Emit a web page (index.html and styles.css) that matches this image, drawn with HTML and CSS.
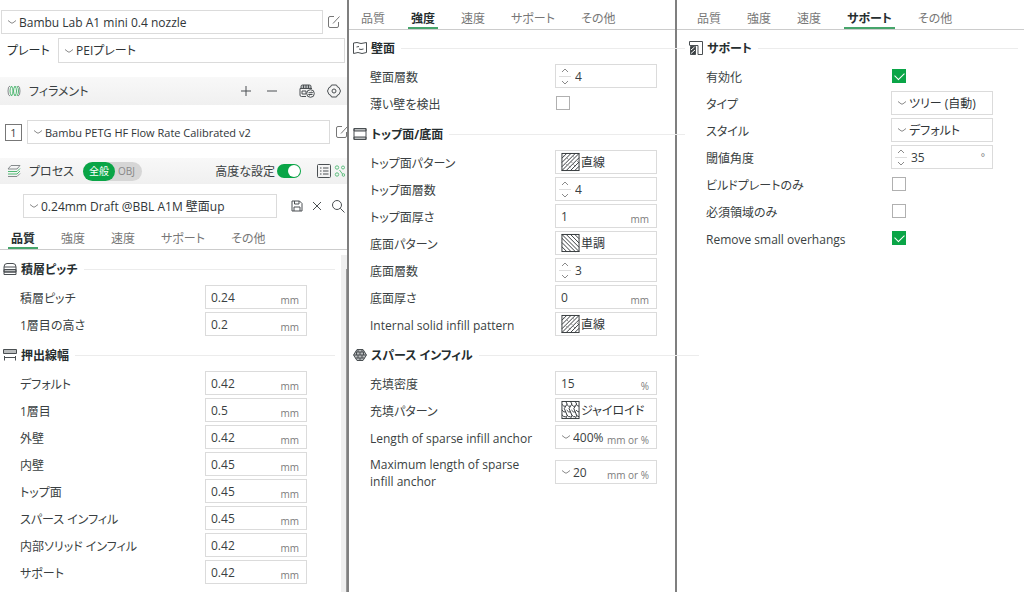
FILE: index.html
```
<!DOCTYPE html>
<html lang="ja">
<head>
  <meta charset="utf-8">
  <title>Print Settings</title>
  <link rel="stylesheet" href="styles.css">
</head>
<body>
  <!-- Shared icons -->
  <svg class="sprite" aria-hidden="true">
    <symbol id="chevron" viewBox="0 0 10 6"><path d="M1 1.500L4 3.800Q5 4.500 6 3.800L9 1.500" /></symbol>
    <symbol id="up" viewBox="0 0 8 5"><path d="M1 4L4 1L7 4" /></symbol>
    <symbol id="down" viewBox="0 0 8 5"><path d="M1 1L4 4L7 1" /></symbol>
    <symbol id="edit" viewBox="0 0 14 14"><path d="M7 1.500H3Q1.500 1.500 1.500 3V11Q1.500 12.500 3 12.500H10Q11.500 12.500 11.500 11V7M6 8.500L12.500 1.500" /></symbol>
    <symbol id="grid" viewBox="0 0 20 20">
      <rect x="1" y="1" width="18" height="18" />
      <path d="M1 6L6 1M1 10.500L10.500 1M1 15L15 1M1 19L19 1M5.500 19L19 5.500M10 19L19 10M14.500 19L19 14.500" />
      <path class="thin" d="M6 5.500L8 7.500M12 3.500L14 5.500M4 11L6 13M10 9L12 11M16 8L18 10M8 14L10 16M13 12.500L15 14.500M3 3L4 4" />
    </symbol>
    <symbol id="mono" viewBox="0 0 20 20">
      <rect x="1" y="1" width="18" height="18" />
      <path d="M1 14L6 19M1 9.500L10.500 19M1 5L15 19M1 1L19 19M5.500 1L19 14.500M10 1L19 10M14.500 1L19 5.500" />
    </symbol>
    <symbol id="gyroid" viewBox="0 0 20 20">
      <rect x="1" y="1" width="18" height="18" />
      <path d="M5 1Q8 4 5 6T5 12T5 19M10 1Q13 4 10 6T10 12T10 19M15 1Q18 4 15 6T15 12T15 19" />
      <path d="M1 4Q3 7 5 6M6 4Q8 7 10 6M11 4Q13 7 15 6M16 4Q17 6 19 6M1 10Q3 13 5 12M6 10Q8 13 10 12M11 10Q13 13 15 12M16 10Q17 12 19 12M1 15Q3 18 5 17M6 15Q8 18 10 17M11 15Q13 18 15 17M16 15Q17 17 19 17" />
    </symbol>
  </svg>

  <main class="layout">
    <div class="panel panel-quality">
      <div class="printer-row">
        <label class="field"><svg class="chevron"><use href="#chevron" /></svg>
          <select aria-label="プリンター"><option>Bambu Lab A1 mini 0.4 nozzle</option></select></label>
        <button class="icon-button" aria-label="編集"><svg class="edit"><use href="#edit" /></svg></button>
      </div>
      <div class="plate-row">
        <label for="plate">プレート</label>
        <div class="field"><svg class="chevron"><use href="#chevron" /></svg>
          <select id="plate"><option>PEIプレート</option></select></div>
      </div>

      <div class="bar">
        <svg class="bar-icon" viewBox="0 0 14 14">
          <path class="gray" d="M3 2Q1 2 1 7T3 12M11 2Q13 2 13 7T11 12" />
          <path class="green" d="M4.500 2Q3 4 3 7T4.500 12Q6 10 6 7T4.500 2M8 2Q6.500 4 6.500 7T8 12Q9.500 10 9.500 7T8 2M10 2Q11.500 4 11.500 7T10 12" />
        </svg>
        <h1>フィラメント</h1>
        <div class="filament-tools">
          <button class="icon-button" aria-label="追加"><svg class="tool" viewBox="0 0 14 14"><path d="M7 2V12M2 7H12" /></svg></button>
          <button class="icon-button" aria-label="削除"><svg class="tool" viewBox="0 0 14 14"><path d="M2 7H12" /></svg></button>
          <button class="icon-button ams" aria-label="AMS"><svg viewBox="0 0 16 14">
            <path class="fill" d="M2 4.500V2.500Q2 1 3.500 1H10.500Q12 1 12 2.500V4.500Z" />
            <path d="M1 4.500H13M1 4.500V11Q1 12.500 2.500 12.500H7M4.500 1V4.500M7 1V4.500M9.500 1V4.500M3 7H7V10H3Z" />
            <circle cx="11.500" cy="9.500" r="3.800" /><path d="M9.500 8.700H13.500L12.500 7.700M13.500 10.500H9.500L10.500 11.500" /></svg></button>
          <button class="icon-button" aria-label="設定"><svg class="tool" viewBox="0 0 14 14"><path d="M4.500 1H9.500L10.500 3L12 3.500L13.500 7L12 10.500L10.500 11L9.500 13H4.500L3.500 11L2 10.500L0.500 7L2 3.500L3.500 3Z" /><circle cx="7" cy="7" r="2" /></svg></button>
        </div>
      </div>
      <div class="filament-row">
        <span class="slot">1</span>
        <label class="field"><svg class="chevron"><use href="#chevron" /></svg>
          <select aria-label="フィラメント"><option>Bambu PETG HF Flow Rate Calibrated v2</option></select></label>
        <button class="icon-button" aria-label="編集"><svg class="edit"><use href="#edit" /></svg></button>
      </div>

      <div class="bar bar-process">
        <svg class="bar-icon" viewBox="0 0 14 14">
          <path class="gray" d="M4 1.500H13L10 5H1Z" />
          <path class="green" d="M1 7.500H10L13 4.500M1 10H10L13 7" />
          <path class="gray" d="M1 12.500H10L13 9.500" />
        </svg>
        <h1>プロセス</h1>
        <div class="scope">
          <button class="selected">全般</button>
          <button>OBJ</button>
        </div>
        <label class="advanced">高度な設定<input type="checkbox" class="switch" checked></label>
        <div class="process-tools">
          <button class="icon-button" aria-label="一覧"><svg class="tool" viewBox="0 0 14 14"><rect x="0.500" y="0.500" width="13" height="13" rx="1" /><path d="M3 4H4.500M6 4H11.500M3 7H4.500M6 7H11.500M3 10H4.500M6 10H11.500" /></svg></button>
          <button class="icon-button compare" aria-label="比較"><svg viewBox="0 0 11 14"><circle cx="3" cy="3.500" r="1.700" /><circle cx="9" cy="3.500" r="1.500" /><circle cx="3" cy="10.500" r="1.700" /><circle cx="9.500" cy="11" r="1.300" /><path d="M5.500 6L8.500 10" /></svg></button>
        </div>
      </div>
      <div class="preset-row">
        <label class="field"><svg class="chevron"><use href="#chevron" /></svg>
          <select aria-label="プロセス"><option>0.24mm Draft @BBL A1M 壁面up</option></select></label>
        <div class="preset-tools">
          <button class="icon-button" aria-label="保存"><svg class="small" viewBox="0 0 12 12"><path d="M1 1H8.500L11 3.500V11H1ZM3.500 1V4H8V1M3 11V7H9V11" /></svg></button>
          <button class="icon-button" aria-label="リセット"><svg class="small" viewBox="0 0 12 12"><path d="M2 2L10 10M10 2L2 10" /></svg></button>
          <button class="icon-button" aria-label="検索"><svg class="tool" viewBox="0 0 14 14"><circle cx="6" cy="6" r="4.500" /><path d="M9.300 9.300L13.500 13.500" /></svg></button>
        </div>
      </div>

      <nav class="tabs">
        <a href="#" class="active">品質</a>
        <a href="#">強度</a>
        <a href="#">速度</a>
        <a href="#">サポート</a>
        <a href="#">その他</a>
      </nav>
      <div class="scroll-area">
        <div class="settings">
          <h2><svg viewBox="0 0 14 14"><path class="fill" d="M1 7.500H13V10H1Z" /><path d="M1 5Q1 1.500 4 1.500H10Q13 1.500 13 5V12.500H1ZM1 7.500H13M1 10H13M1 5H13" /></svg>積層ピッチ</h2>
          <div class="row"><label for="layer">積層ピッチ</label><div class="field"><input id="layer" value="0.24"><span class="unit">mm</span></div></div>
          <div class="row"><label for="first-layer">1層目の高さ</label><div class="field"><input id="first-layer" value="0.2"><span class="unit">mm</span></div></div>

          <h2><svg viewBox="0 0 14 14"><path class="fill" d="M0.500 1.500H13.500V5.500H0.500Z" /><path d="M1.500 8V12.500M12.500 8V12.500M1.500 9.500H12.500" /></svg>押出線幅</h2>
          <div class="row"><label for="w-default">デフォルト</label><div class="field"><input id="w-default" value="0.42"><span class="unit">mm</span></div></div>
          <div class="row"><label for="w-first">1層目</label><div class="field"><input id="w-first" value="0.5"><span class="unit">mm</span></div></div>
          <div class="row"><label for="w-outer">外壁</label><div class="field"><input id="w-outer" value="0.42"><span class="unit">mm</span></div></div>
          <div class="row"><label for="w-inner">内壁</label><div class="field"><input id="w-inner" value="0.45"><span class="unit">mm</span></div></div>
          <div class="row"><label for="w-top">トップ面</label><div class="field"><input id="w-top" value="0.45"><span class="unit">mm</span></div></div>
          <div class="row"><label for="w-sparse">スパース インフィル</label><div class="field"><input id="w-sparse" value="0.45"><span class="unit">mm</span></div></div>
          <div class="row"><label for="w-solid">内部ソリッド インフィル</label><div class="field"><input id="w-solid" value="0.42"><span class="unit">mm</span></div></div>
          <div class="row"><label for="w-support">サポート</label><div class="field"><input id="w-support" value="0.42"><span class="unit">mm</span></div></div>
        </div>
        <div class="scrollbar"></div>
      </div>
    </div>

    <div class="panel panel-strength">
      <nav class="tabs">
        <a href="#">品質</a>
        <a href="#" class="active">強度</a>
        <a href="#">速度</a>
        <a href="#">サポート</a>
        <a href="#">その他</a>
      </nav>
      <div class="settings">
        <h2><svg viewBox="0 0 14 14"><path d="M0.500 2L4 1.500L8 2.500L13.500 1.500V11.500L9 12.500L5 11.500L0.500 12.500ZM3.500 6L6 5.500M6 8L8 8.500L10.500 8" /></svg>壁面</h2>
        <div class="row"><label for="walls">壁面層数</label><div class="field spin">
          <span class="arrows"><button aria-label="増やす"><svg><use href="#up" /></svg></button><button aria-label="減らす"><svg><use href="#down" /></svg></button></span><input id="walls" value="4"></div></div>
        <div class="row"><label for="thin">薄い壁を検出</label><input type="checkbox" class="check" id="thin"></div>

        <h2><svg viewBox="0 0 14 14"><path class="fill" d="M1 1.500H13V4H1ZM1 10H13V12.500H1Z" /><path d="M1 1.500H13V12.500H1Z" /></svg>トップ面/底面</h2>
        <div class="row"><label for="top-pattern">トップ面パターン</label><div class="field pattern"><svg><use href="#grid" /></svg><select id="top-pattern"><option>直線</option></select></div></div>
        <div class="row"><label for="top-layers">トップ面層数</label><div class="field spin">
          <span class="arrows"><button aria-label="増やす"><svg><use href="#up" /></svg></button><button aria-label="減らす"><svg><use href="#down" /></svg></button></span><input id="top-layers" value="4"></div></div>
        <div class="row"><label for="top-thick">トップ面厚さ</label><div class="field"><input id="top-thick" value="1"><span class="unit">mm</span></div></div>
        <div class="row"><label for="bottom-pattern">底面パターン</label><div class="field pattern"><svg><use href="#mono" /></svg><select id="bottom-pattern"><option>単調</option></select></div></div>
        <div class="row"><label for="bottom-layers">底面層数</label><div class="field spin">
          <span class="arrows"><button aria-label="増やす"><svg><use href="#up" /></svg></button><button aria-label="減らす"><svg><use href="#down" /></svg></button></span><input id="bottom-layers" value="3"></div></div>
        <div class="row"><label for="bottom-thick">底面厚さ</label><div class="field"><input id="bottom-thick" value="0"><span class="unit">mm</span></div></div>
        <div class="row"><label for="solid-pattern">Internal solid infill pattern</label><div class="field pattern"><svg><use href="#grid" /></svg><select id="solid-pattern"><option>直線</option></select></div></div>

        <h2><svg viewBox="0 0 14 14"><path class="fill" d="M4 1.500H10L13.500 7L10 12.500H4L0.500 7Z" /><path d="M2.500 4H11.500M1 7H13M2.500 10H11.500M5 1.500V4M9 1.500V4M3.500 4V7M7 4V7M10.500 4V7M5 7V10M9 7V10M7 10V12.500" /></svg>スパース インフィル</h2>
        <div class="row"><label for="density">充填密度</label><div class="field"><input id="density" value="15"><span class="unit">%</span></div></div>
        <div class="row"><label for="infill">充填パターン</label><div class="field pattern"><svg><use href="#gyroid" /></svg><select id="infill"><option>ジャイロイド</option></select></div></div>
        <div class="row"><label for="anchor">Length of sparse infill anchor</label><div class="field"><svg class="chevron"><use href="#chevron" /></svg><input id="anchor" value="400%"><span class="unit">mm or %</span></div></div>
        <div class="row tall"><label for="anchor-max">Maximum length of sparse infill anchor</label><div class="field"><svg class="chevron"><use href="#chevron" /></svg><input id="anchor-max" value="20"><span class="unit">mm or %</span></div></div>
      </div>
    </div>

    <div class="panel panel-support">
      <nav class="tabs">
        <a href="#">品質</a>
        <a href="#">強度</a>
        <a href="#">速度</a>
        <a href="#" class="active">サポート</a>
        <a href="#">その他</a>
      </nav>
      <div class="settings">
        <h2><svg viewBox="0 0 14 14"><path d="M0.500 4V0.500H13.500V13.500H9V4.500H0.500" /><path class="solid" d="M1.500 5.500H6.500V13.500H1.500Z" /><path class="white" d="M2 9L5.500 6M2 12.500L6 9" /></svg>サポート</h2>
        <div class="row"><label for="enable">有効化</label><input type="checkbox" class="check" id="enable" checked></div>
        <div class="row"><label for="type">タイプ</label><div class="field"><svg class="chevron"><use href="#chevron" /></svg><select id="type"><option>ツリー (自動)</option></select></div></div>
        <div class="row"><label for="style">スタイル</label><div class="field"><svg class="chevron"><use href="#chevron" /></svg><select id="style"><option>デフォルト</option></select></div></div>
        <div class="row"><label for="angle">閾値角度</label><div class="field spin">
          <span class="arrows"><button aria-label="増やす"><svg><use href="#up" /></svg></button><button aria-label="減らす"><svg><use href="#down" /></svg></button></span><input id="angle" value="35"><span class="unit degree">°</span></div></div>
        <div class="row"><label for="plate-only">ビルドプレートのみ</label><input type="checkbox" class="check" id="plate-only"></div>
        <div class="row"><label for="critical">必須領域のみ</label><input type="checkbox" class="check" id="critical"></div>
        <div class="row"><label for="overhangs">Remove small overhangs</label><input type="checkbox" class="check" id="overhangs" checked></div>
      </div>
    </div>
  </main>
</body>
</html>
```
FILE: styles.css
```
* {
  box-sizing: border-box;
}

body {
  margin: 0;
  background: #fff;
  color: #3a3f42;
  font-family: "Open Sans", "Noto Sans CJK JP", sans-serif;
  font-size: 12px;
  line-height: 17px;
  font-feature-settings: "palt";
}

button,
input,
select {
  font: inherit;
  font-feature-settings: inherit;
  color: inherit;
  margin: 0;
  padding: 0;
  border: 0;
  background: none;
  appearance: none;
}

svg {
  display: block;
  flex: none;
  fill: none;
  stroke: #4a4f52;
  stroke-width: 1;
}

.sprite {
  position: absolute;
  width: 0;
  height: 0;
}

.layout {
  display: grid;
  grid-template-columns: 349fr 328fr 347fr;
  min-height: 100vh;
}

.panel {
  --indent: 3px;
  min-width: 0;
  border-right: 2px solid #7f7f7f;
}

.panel-quality {
  display: flex;
  flex-direction: column;
  padding-top: 10px;
}

.panel-strength {
  --indent: 4px;
  padding-top: 8px;
}

.panel-support {
  --indent: 12px;
  padding-top: 8px;
  border-right: 0;
}

/* Fields */
.field {
  display: flex;
  align-items: center;
  height: 24px;
  padding: 0 5px;
  border: 1px solid #dbdbdb;
  background: #fff;
  min-width: 0;
}

.field input,
.field select {
  flex: 1;
  min-width: 0;
  width: 0;
  height: 22px;
}

.field input {
  padding-top: 1px;
}

.field select {
  color: #303538;
}

.chevron {
  width: 10px;
  height: 6px;
  margin-right: 2px;
  stroke: #8a8a8a;
}

.unit {
  padding: 5px 2px 0 0;
  font-size: 10px;
  line-height: 14px;
  color: #7c7c7c;
}

.degree {
  padding-top: 0;
}

.icon-button {
  display: flex;
  align-items: center;
  justify-content: center;
}

.edit,
.tool {
  width: 14px;
  height: 14px;
}

.edit {
  stroke: #777;
}

.small {
  width: 12px;
  height: 12px;
}

/* Printer and plate */
.printer-row {
  display: flex;
  gap: 4px;
  padding: 0 6px 0 1px;
}

.printer-row .field,
.plate-row .field,
.filament-row .field,
.preset-row .field {
  flex: 1;
}

.plate-row {
  display: flex;
  align-items: center;
  padding: 4px 2px 14px 7px;
}

.plate-row label {
  width: 51px;
  color: #262e30;
}

.plate-row .field {
  height: 25px;
}

.bar {
  display: flex;
  align-items: center;
  height: 28px;
  padding: 0 0 0 7px;
  background: linear-gradient(#f8f8f8, #f0f0f0);
}

.bar-process {
  height: 26px;
}

.bar h1 {
  margin: 0 0 0 8px;
  font-size: 12px;
  font-weight: 400;
}

.bar-icon {
  width: 14px;
  height: 14px;
}

.gray {
  stroke: #858a8c;
}

.green {
  stroke: #4eb972;
}

.filament-tools {
  display: flex;
  align-items: center;
  gap: 12px;
  margin-left: auto;
  padding-right: 6px;
}

.ams {
  margin-left: 8px;
}

.ams svg {
  width: 16px;
  height: 14px;
}

.filament-row {
  display: flex;
  align-items: center;
  gap: 5px;
  padding: 15px 0 14px 5px;
  font-size: 11px;
}

.filament-row .icon-button {
  width: 12px;
  justify-content: flex-start;
}

.slot {
  width: 17px;
  height: 17px;
  border: 1px solid #777;
  text-align: center;
  line-height: 15px;
}

/* Process */
.scope {
  display: flex;
  height: 19px;
  margin-left: 9px;
  border-radius: 10px;
  background: #d6d6d6;
}

.scope button {
  padding: 0 7px 0 3px;
  font-size: 10px;
  color: #888;
}

.scope .selected {
  padding: 0 6px;
  border-radius: 10px;
  background: #0aa547;
  color: #fff;
}

.advanced {
  display: flex;
  align-items: center;
  gap: 2px;
  margin-left: auto;
}

.switch {
  display: flex;
  align-items: center;
  width: 24px;
  height: 14px;
  padding: 1px;
  border-radius: 7px;
  background: #0aa547;
}

.switch::after {
  content: "";
  width: 12px;
  height: 12px;
  margin-left: auto;
  border-radius: 50%;
  background: #fff;
}

.process-tools {
  display: flex;
  gap: 3px;
  margin-left: 16px;
  padding-right: 2px;
}

.compare svg {
  width: 11px;
  height: 14px;
  stroke: #5fbf80;
}

.preset-row {
  display: flex;
  padding: 10px 2px 10px 23px;
}

.preset-tools {
  display: flex;
  gap: 8px;
  margin-left: 14px;
}

/* Tabs */
.tabs {
  display: flex;
  gap: 20px;
  height: 22px;
  padding-left: calc(var(--indent) + 5px);
  border-bottom: 1px solid #ccc;
}

.tabs a {
  height: 21px;
  padding: 0 3px;
  line-height: 22px;
  color: #777;
  text-decoration: none;
}

.tabs .active {
  border-bottom: 2px solid #46a56b;
  color: #262e30;
  font-weight: 700;
}

/* Setting rows */
.scroll-area {
  display: flex;
  flex: 1;
}

.settings {
  flex: 1;
  min-width: 0;
  padding-top: 2px;
  padding-left: var(--indent);
}

.panel-quality .settings {
  padding-top: 3px;
}

.settings h2 {
  display: flex;
  align-items: center;
  height: 32px;
  margin: 0;
  color: #262e30;
  font-size: 12px;
  font-weight: 700;
}

.settings h2 svg {
  width: 14px;
  height: 14px;
  margin-right: 4px;
}

.settings h2::after {
  content: "";
  flex: 1;
  height: 1px;
  margin-left: 6px;
  margin-right: 6px;
  background: #ececec;
}

/* The rules run on past the divider */
.panel-strength .settings h2::after {
  margin-right: -10px;
}

.panel-strength .settings h2:last-of-type::after {
  margin-right: -24px;
}

.fill {
  fill: #b9bcbd;
}

.solid {
  fill: #3a3f42;
}

.white {
  stroke: #fff;
}

.row {
  display: grid;
  grid-template-columns: 185px 102px;
  align-items: center;
  min-height: 24px;
  margin-bottom: 3px;
  padding-left: 17px;
}

.row label {
  padding: 2px 20px 0 0;
}

.row.tall {
  padding-top: 2px;
}

.spin {
  padding-left: 3px;
}

.arrows {
  display: flex;
  flex-direction: column;
  width: 12px;
  margin-right: 4px;
}

.arrows button {
  display: flex;
  align-items: center;
  justify-content: center;
  height: 11px;
}

.arrows button + button {
  border-top: 1px solid #ddd;
}

.arrows svg {
  width: 8px;
  height: 5px;
  stroke: #8a8a8a;
}

.pattern svg {
  width: 19px;
  height: 20px;
  margin-right: 1px;
  stroke: #303538;
}

.thin {
  stroke: #8a8a8a;
}

.check {
  display: flex;
  align-items: center;
  justify-content: center;
  width: 14px;
  height: 14px;
  margin-left: 1px;
  border: 1px solid #b0b0b0;
  background: #fff;
}

.check:checked {
  border-color: #0aa547;
  background: #0aa547;
}

.check:checked::after {
  content: "";
  width: 8px;
  height: 5px;
  margin-bottom: 2px;
  border-left: 1px solid #fff;
  border-bottom: 1px solid #fff;
  transform: rotate(-45deg);
}

.scrollbar {
  width: 6px;
  margin-top: 5px;
  background: #efefef;
}

.scrollbar::after {
  content: "";
  display: block;
  width: 1px;
  height: calc(100% - 14px);
  margin: 14px 0 0 auto;
  background: #999;
}
```
